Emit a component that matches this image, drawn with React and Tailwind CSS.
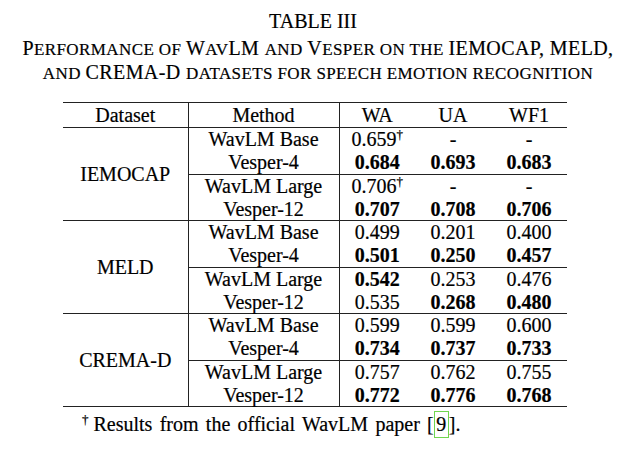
// small caps in the LaTeX way: capitals at full size, lowercase as smaller capitals
function SmallCaps({ text }) {
    const parts = [];
    let buf = '';
    let lower = null;
    for (const ch of text) {
        const isLower = ch !== ch.toUpperCase();
        if (lower !== null && isLower !== lower && ch !== ' ') {
            parts.push([buf, lower]);
            buf = '';
        }
        if (ch !== ' ') lower = isLower;
        buf += ch;
    }
    if (buf) parts.push([buf, lower]);
    return parts.map(([t, low], i) =>
        low ? (
            <span key={i} className="text-[17px] uppercase">
                {t}
            </span>
        ) : (
            <span key={i}>{t}</span>
        )
    );
}

export default function App() {
    const groups = [
        {
            name: 'IEMOCAP',
            rows: [
                ['WavLM Base', ['0.659', false, true], ['-', false], ['-', false]],
                ['Vesper-4', ['0.684', true], ['0.693', true], ['0.683', true]],
                ['WavLM Large', ['0.706', false, true], ['-', false], ['-', false]],
                ['Vesper-12', ['0.707', true], ['0.708', true], ['0.706', true]],
            ],
        },
        {
            name: 'MELD',
            rows: [
                ['WavLM Base', ['0.499', false], ['0.201', false], ['0.400', false]],
                ['Vesper-4', ['0.501', true], ['0.250', true], ['0.457', true]],
                ['WavLM Large', ['0.542', true], ['0.253', false], ['0.476', false]],
                ['Vesper-12', ['0.535', false], ['0.268', true], ['0.480', true]],
            ],
        },
        {
            name: 'CREMA-D',
            rows: [
                ['WavLM Base', ['0.599', false], ['0.599', false], ['0.600', false]],
                ['Vesper-4', ['0.734', true], ['0.737', true], ['0.733', true]],
                ['WavLM Large', ['0.757', false], ['0.762', false], ['0.755', false]],
                ['Vesper-12', ['0.772', true], ['0.776', true], ['0.768', true]],
            ],
        },
    ];

    const rowH = ['h-[24px]', 'h-[23px]', 'h-[24px]', 'h-[22px]'];

    return (
        <div className="w-[626px] h-[464px] bg-white text-black font-['Liberation_Serif',serif] text-[20px] leading-[23px] [-webkit-text-stroke:0.2px]">
            {/* caption */}
            <div className="pt-[9px] text-center">
                <div className="leading-[24px]">TABLE III</div>
                <div className="mt-[4px] pl-[10px] tracking-[0.4px]">
                    <SmallCaps text="Performance of WavLM and Vesper on the IEMOCAP, MELD," />
                </div>
                <div className="pl-[10px] tracking-[0.4px]">
                    <SmallCaps text="and CREMA-D datasets for speech emotion recognition" />
                </div>
            </div>

            <div className="pl-[63px] pt-[17px]">
                <table className="w-[504px] table-fixed border-collapse leading-[21px]">
                    <colgroup>
                        <col className="w-[125px]" />
                        <col className="w-[151px]" />
                        <col className="w-[76px]" />
                        <col className="w-[76px]" />
                        <col className="w-[76px]" />
                    </colgroup>
                    <thead>
                        <tr className="h-[25px] border-t border-b border-[#222]">
                            <th className="p-0 font-normal border-r border-[#222]">Dataset</th>
                            <th className="p-0 font-normal border-r border-[#222]">Method</th>
                            <th className="p-0 font-normal">WA</th>
                            <th className="p-0 font-normal">UA</th>
                            <th className="p-0 font-normal">WF1</th>
                        </tr>
                    </thead>
                    <tbody>
                        {groups.map((g) =>
                            g.rows.map((r, i) => (
                                <tr
                                    key={g.name + i}
                                    className={rowH[i] + (i === 1 || i === 3 ? ' border-b border-[#222]' : '')}
                                >
                                    {i === 0 && (
                                        <td rowSpan={4} className="p-0 text-center align-middle border-r border-b border-[#222]">
                                            {g.name}
                                        </td>
                                    )}
                                    <td className="p-0 text-center border-r border-[#222]">{r[0]}</td>
                                    {r.slice(1).map(([v, bold, dag], j) => (
                                        <td key={j} className={'p-0 text-center ' + (bold ? 'font-bold' : '')}>
                                            {v}
                                            {dag && <sup className="text-[13px] top-[-7px] relative align-baseline">†</sup>}
                                        </td>
                                    ))}
                                </tr>
                            ))
                        )}
                    </tbody>
                </table>

                <div className="pt-[4px] pl-[19px] leading-[24px] [word-spacing:2.3px]">
                    <sup className="text-[13px] relative top-[-7px] align-baseline mr-[5px]">†</sup>
                    Results from the official WavLM paper [
                    <span className="inline-block w-[15px] text-center border border-[#6fd64f] leading-[25px] [word-spacing:0]">9</span>
                    ].
                </div>
            </div>
        </div>
    );
}
